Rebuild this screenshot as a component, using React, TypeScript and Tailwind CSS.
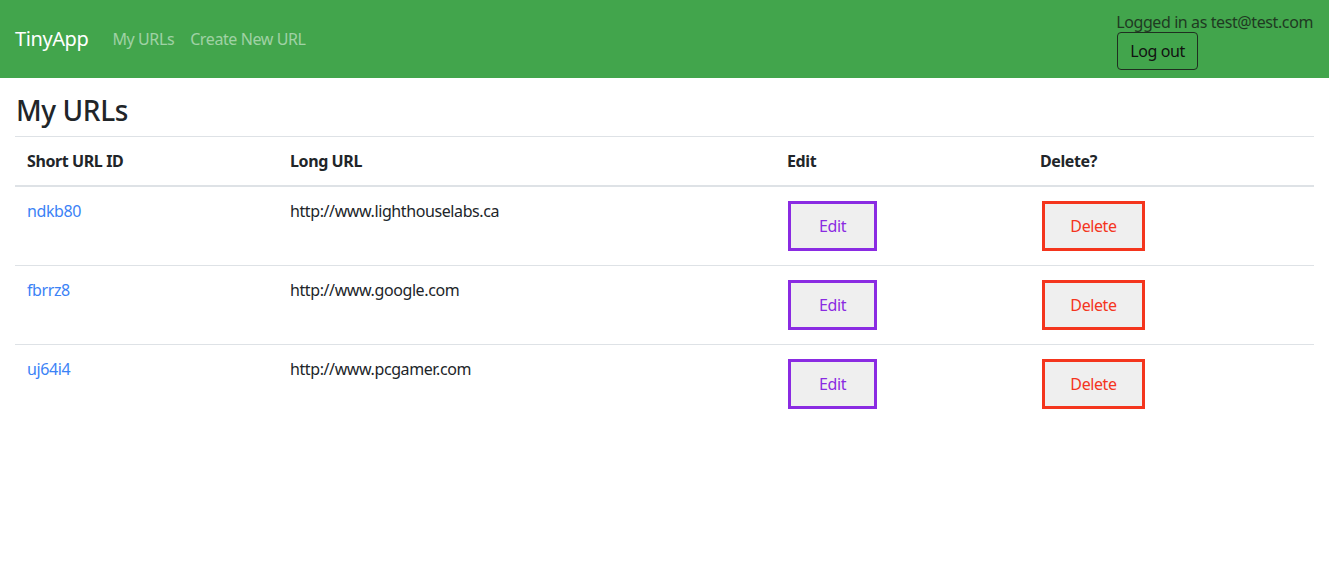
import React from 'react';

const urls = [
  { id: 'ndkb80', long: 'http://www.lighthouselabs.ca' },
  { id: 'fbrrz8', long: 'http://www.google.com' },
  { id: 'uj64i4', long: 'http://www.pcgamer.com' },
];

export default function App() {
  return (
    <div className="min-h-screen bg-white text-[#212529] font-['Noto_Sans',sans-serif] text-base tracking-[-0.025em]">
      {/* Navbar */}
      <nav className="h-[78px] bg-[#42a54c] flex items-start justify-between px-4">
        <div className="flex items-center h-full">
          <span className="text-white text-xl mr-6 -ml-[1px]">TinyApp</span>
          <a className="text-white/50 mr-4">My URLs</a>
          <a className="text-white/50">Create New URL</a>
        </div>
        <div className="pt-[10px]">
          <p className="text-[#1f3a22] leading-6">Logged in as test@test.com</p>
          <button className="ml-[1px] border border-[#1f2f20] rounded px-3 h-[38px] w-[81px] text-[#111] mt-[-2px]">Log out</button>
        </div>
      </nav>

      {/* Content */}
      <main className="px-[15px]">
        <h3 className="text-[28px] font-medium leading-tight mt-[15px] mb-2 ml-[1px]">My URLs</h3>
        <table className="w-full border-collapse text-left">
          <thead>
            <tr className="border-t border-[#dee2e6]">
              <th className="p-3 font-bold border-b-2 border-[#dee2e6] w-[263px] h-[49px]">Short URL ID</th>
              <th className="p-3 font-bold border-b-2 border-[#dee2e6] w-[497px]">Long URL</th>
              <th className="p-3 font-bold border-b-2 border-[#dee2e6] w-[253px]">Edit</th>
              <th className="p-3 font-bold border-b-2 border-[#dee2e6]">Delete?</th>
            </tr>
          </thead>
          <tbody>
            {urls.map((u, i) => (
              <tr key={u.id} className={i > 0 ? 'border-t border-[#dee2e6]' : ''}>
                <td className="p-3 align-top h-[79px]">
                  <a className="text-[#3b82f6]">{u.id}</a>
                </td>
                <td className="p-3 align-top">{u.long}</td>
                <td className="p-3 align-top">
                  <button className="ml-[1px] mt-[2px] border-[3px] border-[#8a2be2] bg-[#efefef] text-[#8a2be2] w-[89px] h-[50px] leading-6">Edit</button>
                </td>
                <td className="p-3 align-top">
                  <button className="ml-[2px] mt-[2px] border-[3px] border-[#f4351d] bg-[#efefef] text-[#f4351d] w-[103px] h-[50px] leading-6">Delete</button>
                </td>
              </tr>
            ))}
          </tbody>
        </table>
      </main>
    </div>
  );
}
